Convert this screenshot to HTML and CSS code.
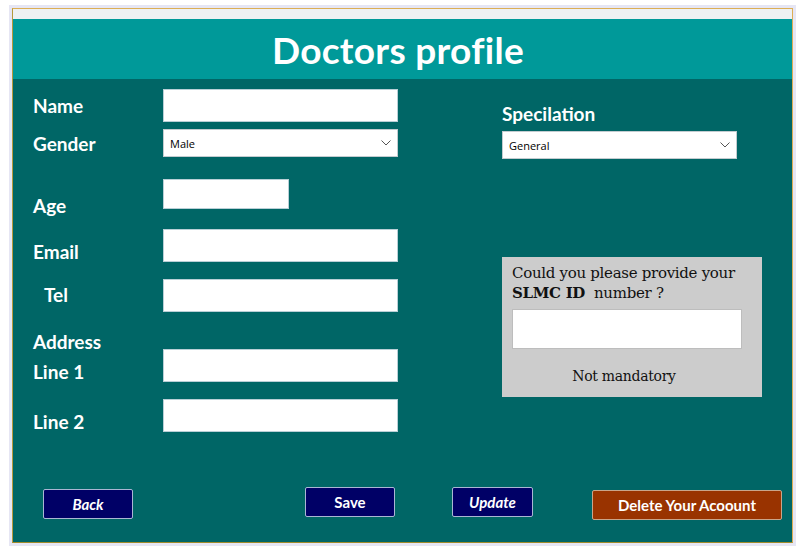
FILE: index.html
```html
<!DOCTYPE html>
<html>
<head>
<meta charset="utf-8">
<link rel="stylesheet" href="styles.css">
</head>
<body>
<div class="shell">
  <div class="frame">
    <div class="strip"></div>
    <div class="header"><h1 class="title">Doctors profile</h1></div>
    <div class="content">
      <div class="columns">
        <div class="left">
          <div class="row r-name"><label class="lbl">Name</label><input class="field" type="text"></div>
          <div class="row r-gender"><label class="lbl">Gender</label>
            <div class="select"><span>Male</span>
              <svg class="chev" width="10" height="6" viewBox="0 0 10 6"><path d="M0.5 0.5 L5 5 L9.5 0.5" fill="none" stroke="#555" stroke-width="1"/></svg>
            </div>
          </div>
          <div class="row r-age"><label class="lbl">Age</label><input class="field short" type="text"></div>
          <div class="row r-email"><label class="lbl">Email</label><input class="field" type="text"></div>
          <div class="row r-tel"><label class="lbl indent">Tel</label><input class="field" type="text"></div>
          <div class="row r-line1"><label class="lbl two"><span>Address</span><span>Line 1</span></label><input class="field" type="text"></div>
          <div class="row r-line2"><label class="lbl">Line 2</label><input class="field" type="text"></div>
        </div>
        <div class="right">
          <div class="spec-label">Specilation</div>
          <div class="select wide"><span>General</span>
            <svg class="chev" width="10" height="6" viewBox="0 0 10 6"><path d="M0.5 0.5 L5 5 L9.5 0.5" fill="none" stroke="#555" stroke-width="1"/></svg>
          </div>
          <div class="slmc">
            <p class="q">Could you please provide your<br><b>SLMC ID</b>&nbsp; number ?</p>
            <input class="slmc-field" type="text">
            <p class="note">Not mandatory</p>
          </div>
        </div>
      </div>
      <div class="buttons">
        <button class="btn navy italic b-back">Back</button>
        <button class="btn navy b-save">Save</button>
        <button class="btn navy italic b-update">Update</button>
        <button class="btn rust b-delete">Delete Your Acoount</button>
      </div>
    </div>
  </div>
</div>
</body>
</html>
```

FILE: styles.css
```css
* { box-sizing: border-box; }
html, body { margin: 0; padding: 0; background: #ffffff; }
body { padding: 5px 0 0 9px; font-family: Lato, "Open Sans", sans-serif; }

.shell {
  width: 787px;
  height: 541px;
  padding: 3px;
  background: #e6e6f4;
}
.frame {
  width: 781px;
  height: 535px;
  border: 1px solid #dcae55;
  border-left-color: #b59a3c;
  border-bottom-color: #a08c2a;
  display: flex;
  flex-direction: column;
}
.strip { height: 10px; background: #eef1f3; }
.header {
  height: 60px;
  background: #009999;
  display: flex;
  align-items: center;
  justify-content: center;
}
.title {
  margin: 0 9px 0 0;
  font-family: Lato, sans-serif;
  font-weight: 700;
  font-size: 37px;
  color: #ffffff;
  letter-spacing: 0.3px;
}
.content {
  flex: 1;
  background: #006666;
  display: flex;
  flex-direction: column;
}
.columns { display: flex; }
.left { width: 385px; padding: 10px 0 0 20px; }
.row { display: flex; align-items: flex-start; height: 33px; }
.lbl {
  width: 130px;
  color: #ffffff;
  font-weight: 700;
  font-size: 19px;
  line-height: 22px;
  flex-shrink: 0;
}
.lbl.indent { padding-left: 11px; }
.lbl.two { display: flex; flex-direction: column; line-height: 30px; margin-top: -22px; }
.field {
  width: 235px;
  height: 33px;
  border: 1px solid #b9cfd6;
  background: #ffffff;
  margin: 0;
  padding: 0;
}
.field.short { width: 126px; height: 30px; }

.r-name .lbl { margin-top: 6px; }
.r-gender { margin-top: 7px; height: 28px; }
.r-gender .lbl { margin-top: 4px; }
.r-age { margin-top: 22px; height: 30px; }
.r-age .lbl { margin-top: 16px; }
.r-email { margin-top: 20px; }
.r-email .lbl { margin-top: 12px; }
.r-tel { margin-top: 17px; }
.r-tel .lbl { margin-top: 5px; }
.r-line1 { margin-top: 37px; }
.r-line2 { margin-top: 17px; }
.r-line2 .lbl { margin-top: 12px; }

.select {
  width: 235px;
  height: 28px;
  background: #ffffff;
  border: 1px solid #c3ccd0;
  display: flex;
  align-items: center;
  justify-content: space-between;
  padding: 0 6px 0 6px;
  font-family: "Open Sans", "Noto Sans", sans-serif;
  font-size: 11px;
  color: #000000;
}

.right { padding: 24px 0 0 104px; width: 390px; }
.spec-label {
  color: #ffffff;
  font-weight: 700;
  font-size: 19px;
  line-height: 22px;
  height: 28px;
}
.select.wide { width: 235px; }

.slmc {
  margin-top: 98px;
  width: 260px;
  height: 140px;
  background: #cccccc;
  padding: 6px 0 0 10px;
}
.q {
  margin: 0;
  font-family: "DejaVu Serif", serif;
  font-size: 15px;
  line-height: 20px;
  color: #111111;
  letter-spacing: -0.3px;
}
.q b { font-weight: 700; }
.slmc-field {
  display: block;
  margin: 6px 0 0 0;
  width: 230px;
  height: 40px;
  border: 1px solid #bdbdbd;
  background: #ffffff;
  padding: 0;
}
.note {
  margin: 19px 0 0 0;
  width: 224px;
  text-align: center;
  font-family: "DejaVu Serif", serif;
  font-size: 14px;
  letter-spacing: -0.3px;
  color: #111111;
}

.buttons { display: flex; align-items: flex-start; margin-top: 55px; padding-left: 30px; }
.btn {
  height: 30px;
  border: 1px solid #a9b6d3;
  border-radius: 2px;
  color: #ffffff;
  font-family: Lato, sans-serif;
  font-weight: 700;
  font-size: 15px;
  padding: 0;
  margin: 0;
}
.btn.navy { background: #000066; }
.btn.rust { background: #993300; border-color: #c9a58a; }
.btn.italic { font-style: italic; }
.b-back { width: 90px; margin-top: 2px; }
.b-save { width: 90px; margin-left: 172px; }
.b-update { width: 81px; margin-left: 57px; }
.b-delete { width: 190px; margin-left: 59px; margin-top: 3px; }
```
